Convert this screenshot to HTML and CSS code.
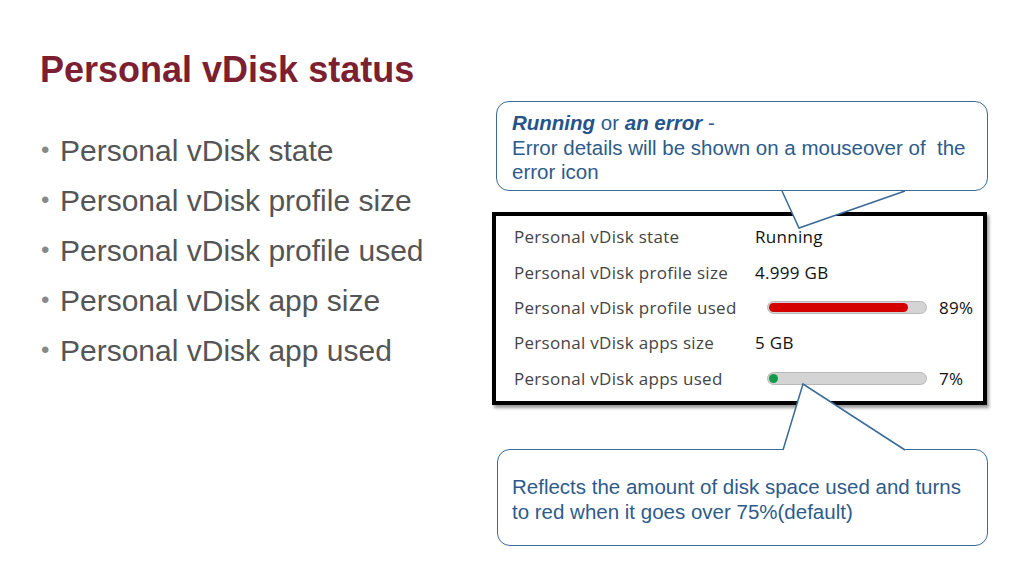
FILE: index.html
```html
<!DOCTYPE html>
<html>
<head>
    <title>Personal vDisk status</title>
    <meta name="viewport" content="width=device-width, initial-scale=1">
<link rel="stylesheet" href="styles.css">
</head>
<body>

  <div class="slide">

    <div class="left">
      <h1 class="title">Personal vDisk status</h1>
      <ul class="bullets">
        <li>Personal vDisk state</li>
        <li>Personal vDisk profile size</li>
        <li>Personal vDisk profile used</li>
        <li>Personal vDisk app size</li>
        <li>Personal vDisk app used</li>
      </ul>
    </div>

    <div class="right">

      <div class="callout top">
        <b><i>Running</i></b> or <b><i>an error</i></b> -<br>
        Error details will be shown on a mouseover of &nbsp;the error icon
      </div>

      <div class="panel">
        <div class="row">
          <span class="label">Personal vDisk state</span>
          <span class="value">Running</span>
        </div>
        <div class="row">
          <span class="label">Personal vDisk profile size</span>
          <span class="value">4.999 GB</span>
        </div>
        <div class="row">
          <span class="label">Personal vDisk profile used</span>
          <span class="bar"><span class="fill red" style="width: 89%;"></span></span>
          <span class="pct">89%</span>
        </div>
        <div class="row">
          <span class="label">Personal vDisk apps size</span>
          <span class="value">5 GB</span>
        </div>
        <div class="row">
          <span class="label">Personal vDisk apps used</span>
          <span class="bar"><span class="fill green"></span></span>
          <span class="pct">7%</span>
        </div>
      </div>

      <div class="callout bottom">
        Reflects the amount of disk space used and turns to red when it goes over 75%(default)
      </div>

      <!-- callout tails -->
      <svg class="tails" width="500" height="576" viewBox="492 0 500 576">
        <path d="M782 191 L799 228 L905 191" fill="#fff" stroke="#3a6a98" stroke-width="1.5"/>
        <path d="M783 450 L803 384 L905 450" fill="#fff" stroke="#3a6a98" stroke-width="1.5"/>
      </svg>

    </div>

  </div>

</body>
</html>
```

FILE: styles.css
```css
body {
  margin: 0;
  background-color: #fff;
  font-family: "Liberation Sans", Arial, sans-serif;
}

.slide {
  width: 1024px;
  height: 576px;
  display: flex;
  overflow: hidden;
}

.left {
  width: 492px;
  flex-shrink: 0;
  padding-left: 40px;
  box-sizing: border-box;
}

.title {
  margin: 47px 0 0 0;
  font-size: 36px;
  line-height: 46px;
  font-weight: bold;
  color: #7b1f31;
}

.bullets {
  list-style: none;
  margin: 32px 0 0 0;
  padding: 0;
}

.bullets li {
  font-size: 30px;
  line-height: 49px;
  color: #555;
}

.bullets li::before {
  content: "\2022";
  display: inline-block;
  width: 20px;
  padding-left: 1px;
  margin-right: -1px;
  font-size: 24px;
  color: #888;
  vertical-align: 3px;
}

.right {
  position: relative;
  width: 500px;
  flex-shrink: 0;
  padding-top: 101px;
  display: flex;
  flex-direction: column;
}

.callout {
  border: 1.5px solid #3a6a98;
  border-radius: 13px;
  background: #fff;
  color: #2e5b8a;
  font-size: 20.5px;
  box-sizing: border-box;
}

.callout b {
  color: #24548a;
}

.callout.top {
  margin-left: 4px;
  width: 492px;
  height: 90px;
  padding: 9px 14px 0 15px;
  line-height: 24.5px;
}

.callout.bottom {
  margin-left: 5px;
  margin-top: 44px;
  width: 491px;
  height: 97px;
  padding: 24px 14px 0 14px;
  line-height: 25px;
}

.panel {
  margin-top: 21px;
  width: 495px;
  height: 193px;
  border: 4px solid #000;
  box-sizing: border-box;
  background: #fff;
  box-shadow: 2px 3px 3px #999;
  padding: 3px 0 0 18px;
  font-family: "Open Sans", "Noto Sans", sans-serif;
  font-size: 17px;
  letter-spacing: 0.3px;
}

.row {
  display: flex;
  align-items: center;
  height: 35.4px;
}

.label {
  width: 241px;
  flex-shrink: 0;
  color: #444;
}

.value {
  color: #111;
}

.bar {
  margin-left: 12px;
  width: 160px;
  height: 13px;
  border-radius: 7px;
  background: #d4d4d4;
  border: 1px solid #b8b8b8;
  box-sizing: border-box;
  padding: 1px;
  display: flex;
}

.fill {
  height: 9px;
  border-radius: 5px;
}

.fill.red {
  background: #d40000;
}

.fill.green {
  width: 9px;
  background: #139a4a;
}

.pct {
  margin-left: 12px;
  color: #111;
}

.tails {
  position: absolute;
  left: 0;
  top: 0;
}
```
